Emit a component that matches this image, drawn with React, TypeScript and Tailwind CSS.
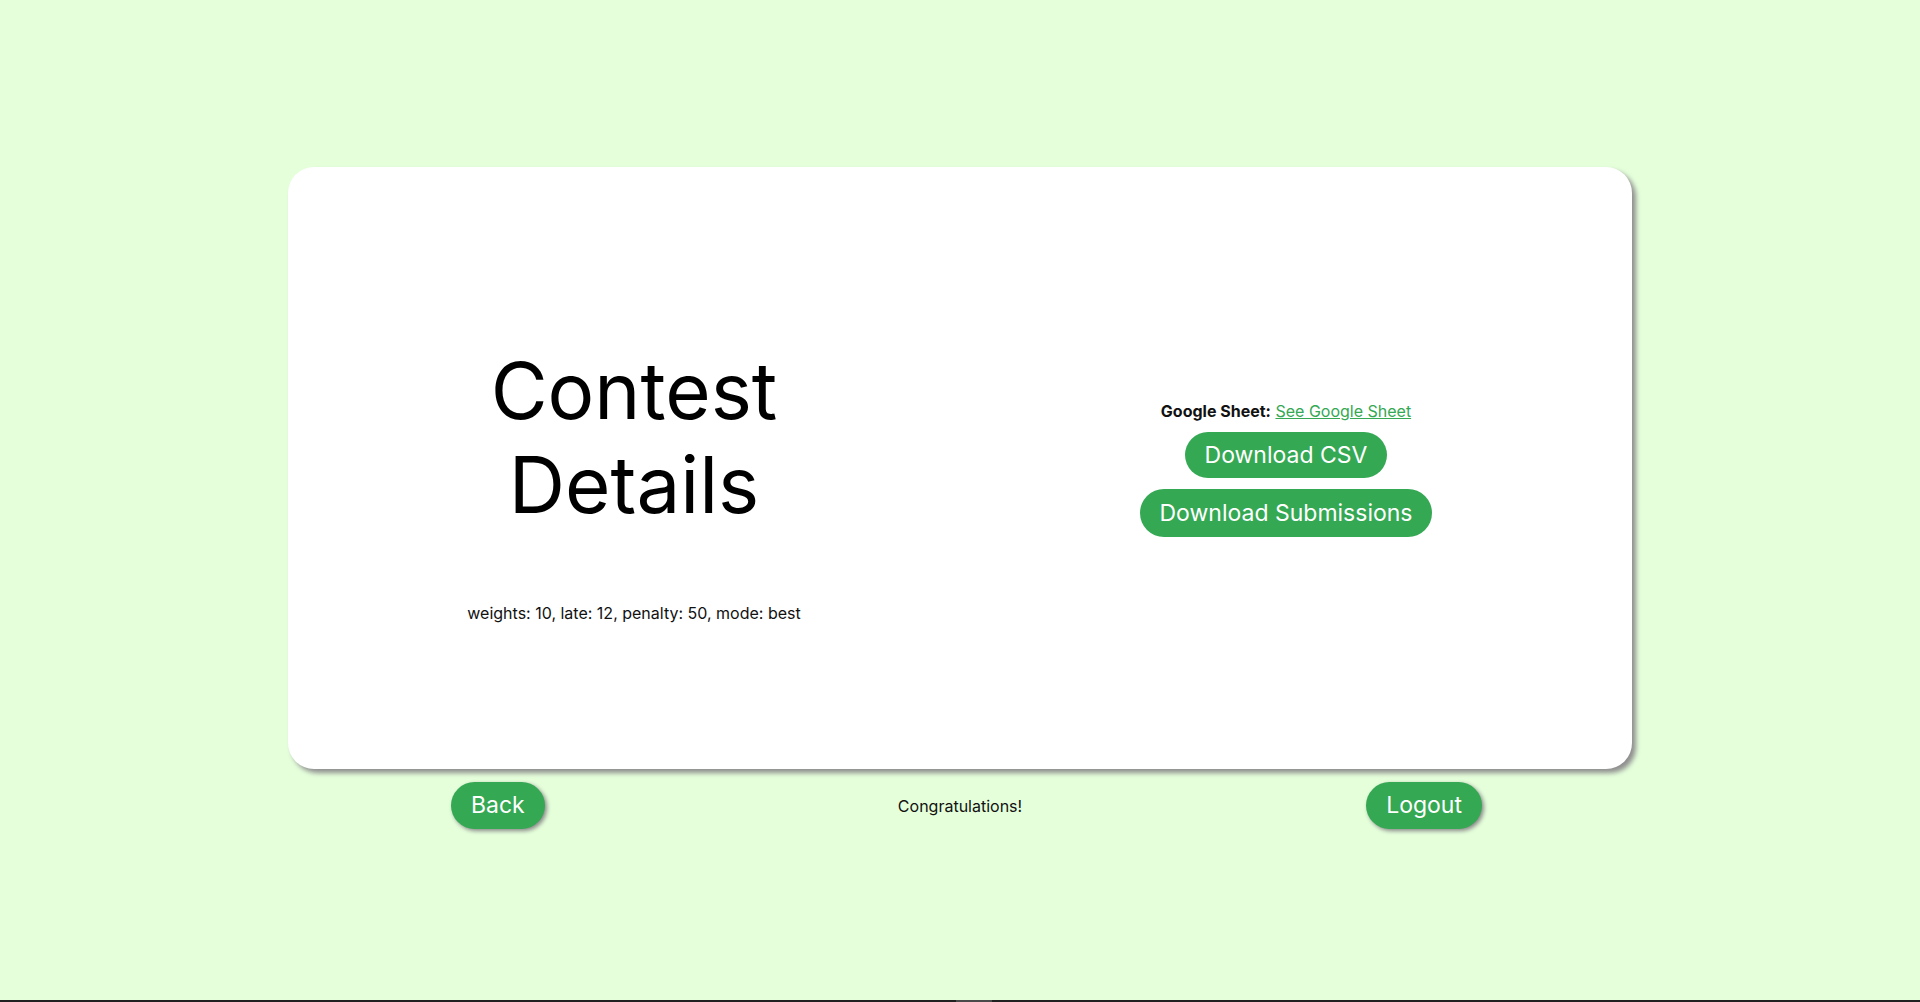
export default function App() {
  return (
    <div
      className="flex h-screen flex-col bg-[#e5ffdb] text-[#111]"
      style={{ fontFamily: "Inter, 'Noto Sans', sans-serif" }}
    >
      <div className="flex-1">
        <div className="mx-auto mt-[167px] flex h-[602px] w-[1344px] rounded-[26px] bg-white p-5 shadow-[4px_4px_5px_#8f8f8f]">
          <div className="flex flex-1 flex-col items-center pt-[157px]">
            <h1 className="text-center text-[78px] leading-[94px] font-normal text-black">
              Contest
              <br />
              Details
            </h1>
            <p className="mt-[69px] text-base">weights: 10, late: 12, penalty: 50, mode: best</p>
          </div>
          <div className="flex flex-1 flex-col items-center justify-center">
            <p className="text-base">
              <span className="font-bold">Google Sheet:</span>{" "}
              <a href="#" className="text-[#34a853] underline">
                See Google Sheet
              </a>
            </p>
            <button className="mt-[9px] h-[46px] rounded-full bg-[#34a853] px-5 text-[23px] text-white">
              Download CSV
            </button>
            <button className="mt-[11px] h-[48px] rounded-full bg-[#34a853] px-5 text-[23px] text-white">
              Download Submissions
            </button>
          </div>
        </div>
        <div className="mt-[13px] grid grid-cols-[1fr_auto_1fr] items-center">
          <button className="ml-[451px] h-[47px] justify-self-start rounded-full bg-[#34a853] px-5 text-[23px] text-white shadow-[2px_2px_4px_#888]">
            Back
          </button>
          <span className="text-base">Congratulations!</span>
          <button className="mr-[438px] h-[47px] justify-self-end rounded-full bg-[#34a853] px-5 text-[23px] text-white shadow-[2px_2px_4px_#888]">
            Logout
          </button>
        </div>
      </div>
      <div className="flex h-[2px] bg-[#202020]">
        <div className="ml-[956px] w-[36px] bg-[#4a4a4a]" />
      </div>
    </div>
  );
}
